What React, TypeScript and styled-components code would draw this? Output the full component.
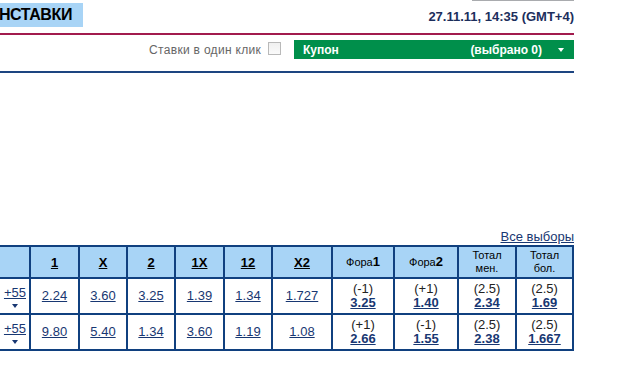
import React from 'react';
import styled, { createGlobalStyle } from 'styled-components';

const GlobalStyle = createGlobalStyle`
    html, body {
        margin: 0;
        padding: 0;
        background: #fff;
    }
    body {
        font-family: "Liberation Sans", Arial, sans-serif;
        font-size: 13px;
        color: #222;
    }
`;

const Page = styled.div`
    width: 700px;
    margin-left: -126px;
`;

const Header = styled.div`
    height: 35px;
    box-sizing: border-box;
    display: flex;
    justify-content: space-between;
    align-items: flex-start;
    border-bottom: 2px solid #a21b4d;
`;

const Title = styled.h1`
    margin: 3px 0 0;
    width: 209px;
    height: 24px;
    box-sizing: border-box;
    padding-right: 11px;
    background: #a8d4f6;
    color: #000;
    font-size: 16px;
    font-weight: bold;
    line-height: 24px;
    letter-spacing: -0.4px;
    text-align: right;
    white-space: nowrap;
`;

const Clock = styled.div`
    display: flex;
    flex-direction: column;
    align-items: flex-end;
`;

const TopRule = styled.div`
    width: 102px;
    height: 1px;
    background: #a9abae;
`;

const DateText = styled.div`
    margin-top: 8px;
    font-size: 13px;
    font-weight: bold;
    line-height: 15px;
    color: #1c2e5c;
`;

const Toolbar = styled.div`
    height: 38px;
    box-sizing: border-box;
    padding-top: 5px;
    display: flex;
    justify-content: flex-end;
    align-items: flex-start;
    border-bottom: 2px solid #1d4581;
`;

const OneClick = styled.label`
    height: 19px;
    display: flex;
    align-items: center;
    margin-right: 13px;
    font-size: 12px;
    letter-spacing: 0.3px;
    color: #666;
`;

const Checkbox = styled.span`
    width: 11px;
    height: 11px;
    margin-left: 7px;
    margin-top: -2px;
    border: 1px solid #b9b9b9;
    background: linear-gradient(#f0f0f0, #fafafa);
`;

const Coupon = styled.div`
    width: 280px;
    height: 19px;
    box-sizing: border-box;
    padding: 0 10px 0 9px;
    display: flex;
    align-items: center;
    background: #008f4b;
    color: #fff;
    font-size: 12px;
    font-weight: bold;
`;

const CouponName = styled.span`
    flex: 1;
`;

const CouponCount = styled.span`
    margin-right: 16px;
`;

const Caret = styled.span<{ $color?: string }>`
    width: 0;
    height: 0;
    border-left: 3px solid transparent;
    border-right: 3px solid transparent;
    border-top: 4px solid ${(p) => p.$color || '#fff'};
`;

const LinksRow = styled.div`
    margin-top: 155px;
    height: 17px;
    display: flex;
    justify-content: flex-end;
    line-height: 17px;
`;

const Link = styled.a<{ $bold?: boolean }>`
    color: #183772;
    text-decoration: underline;
    font-weight: ${(p) => (p.$bold ? 'bold' : 'normal')};
    cursor: pointer;
`;

const Grid = styled.div`
    display: grid;
    grid-template-columns: 117px 34px 47px 46px 46px 47px 46px 58px 60px 62px 56px 55px;
    grid-template-rows: 30px 34px 34px;
    gap: 2px;
    padding: 2px;
    background: #10407f;
`;

const HeadCell = styled.div`
    background: #a8d4f6;
    display: flex;
    flex-direction: column;
    align-items: center;
    justify-content: center;
    text-align: center;
    color: #000;
    font-size: 11px;
    line-height: 13px;
`;

const HeadLink = styled.a`
    color: #000;
    font-size: 13px;
    font-weight: bold;
    text-decoration: underline;
`;

const HeadDigit = styled.b`
    font-size: 13px;
`;

const Cell = styled.div`
    background: #fff;
    display: flex;
    flex-direction: column;
    align-items: center;
    justify-content: center;
    line-height: 14px;
`;

const Line = styled.span`
    color: #222;
`;

const PlusCell = styled(Cell)`
    align-items: flex-end;
    padding-right: 3px;
`;

const PlusBox = styled.div`
    display: flex;
    flex-direction: column;
    align-items: center;
    gap: 4px;
    padding-top: 1px;
`;

type Row = {
    id: number;
    odds: string[];
    lines: [string, string][];
};

const columns = ['1', 'X', '2', '1X', '12', 'X2'];

const rows: Row[] = [
    {
        id: 1,
        odds: ['2.24', '3.60', '3.25', '1.39', '1.34', '1.727'],
        lines: [['(-1)', '3.25'], ['(+1)', '1.40'], ['(2.5)', '2.34'], ['(2.5)', '1.69']],
    },
    {
        id: 2,
        odds: ['9.80', '5.40', '1.34', '3.60', '1.19', '1.08'],
        lines: [['(+1)', '2.66'], ['(-1)', '1.55'], ['(2.5)', '2.38'], ['(2.5)', '1.667']],
    },
];

const App: React.FC = () => (
    <>
        <GlobalStyle />
        <Page>
            <Header>
                <Title>НСТАВКИ</Title>
                <Clock>
                    <TopRule />
                    <DateText>27.11.11, 14:35 (GMT+4)</DateText>
                </Clock>
            </Header>
            <Toolbar>
                <OneClick>
                    Ставки в один клик
                    <Checkbox />
                </OneClick>
                <Coupon>
                    <CouponName>Купон</CouponName>
                    <CouponCount>(выбрано 0)</CouponCount>
                    <Caret />
                </Coupon>
            </Toolbar>
            <LinksRow>
                <Link>Все выборы</Link>
            </LinksRow>
            <Grid>
                <HeadCell />
                <HeadCell />
                {columns.map((c) => (
                    <HeadCell key={c}>
                        <HeadLink>{c}</HeadLink>
                    </HeadCell>
                ))}
                <HeadCell>
                    <span>
                        Фора<HeadDigit>1</HeadDigit>
                    </span>
                </HeadCell>
                <HeadCell>
                    <span>
                        Фора<HeadDigit>2</HeadDigit>
                    </span>
                </HeadCell>
                <HeadCell>
                    Тотал
                    <br />
                    мен.
                </HeadCell>
                <HeadCell>
                    Тотал
                    <br />
                    бол.
                </HeadCell>
                {rows.map((r) => (
                    <React.Fragment key={r.id}>
                        <Cell />
                        <PlusCell>
                            <PlusBox>
                                <Link>+55</Link>
                                <Caret $color="#183772" />
                            </PlusBox>
                        </PlusCell>
                        {r.odds.map((o, i) => (
                            <Cell key={i}>
                                <Link>{o}</Link>
                            </Cell>
                        ))}
                        {r.lines.map(([l, o], i) => (
                            <Cell key={'l' + i}>
                                <Line>{l}</Line>
                                <Link $bold>{o}</Link>
                            </Cell>
                        ))}
                    </React.Fragment>
                ))}
            </Grid>
        </Page>
    </>
);

export default App;
